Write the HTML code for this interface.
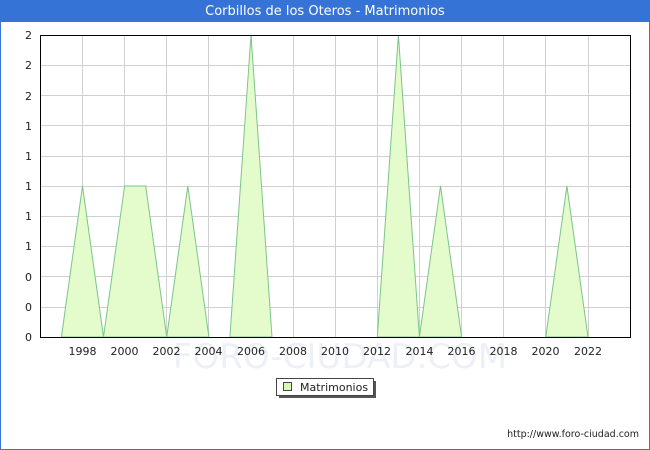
<!DOCTYPE html>
<html><head><meta charset="utf-8"><style>
body{margin:0;width:650px;height:450px;overflow:hidden;background:#fff;font-family:"DejaVu Sans","Liberation Sans",sans-serif;}
.frame{position:absolute;left:0;top:0;width:648px;height:448px;border:1px solid #3a74d8;}
.title{position:absolute;left:0;top:0;width:650px;height:22px;background:#3574d6;color:#fff;font-size:13px;text-align:center;line-height:23px;}
svg{position:absolute;left:0;top:0;}
</style></head><body>
<div class="frame"></div>
<div class="title">Corbillos de los Oteros - Matrimonios</div>
<svg width="650" height="450" font-family="DejaVu Sans, Liberation Sans, sans-serif" font-size="11">
<text x="340" y="368" font-size="34" fill="#eef0f7" text-anchor="middle">FORO-CIUDAD.COM</text>
<g stroke="#d0d0d0" stroke-width="1">
<line x1="40" y1="65.5" x2="631" y2="65.5"/><line x1="40" y1="95.5" x2="631" y2="95.5"/><line x1="40" y1="125.5" x2="631" y2="125.5"/><line x1="40" y1="156.5" x2="631" y2="156.5"/><line x1="40" y1="186.5" x2="631" y2="186.5"/><line x1="40" y1="216.5" x2="631" y2="216.5"/><line x1="40" y1="246.5" x2="631" y2="246.5"/><line x1="40" y1="276.5" x2="631" y2="276.5"/><line x1="40" y1="307.5" x2="631" y2="307.5"/>
<line x1="82.5" y1="35" x2="82.5" y2="338"/><line x1="124.5" y1="35" x2="124.5" y2="338"/><line x1="166.5" y1="35" x2="166.5" y2="338"/><line x1="208.5" y1="35" x2="208.5" y2="338"/><line x1="251.5" y1="35" x2="251.5" y2="338"/><line x1="293.5" y1="35" x2="293.5" y2="338"/><line x1="335.5" y1="35" x2="335.5" y2="338"/><line x1="377.5" y1="35" x2="377.5" y2="338"/><line x1="419.5" y1="35" x2="419.5" y2="338"/><line x1="461.5" y1="35" x2="461.5" y2="338"/><line x1="503.5" y1="35" x2="503.5" y2="338"/><line x1="545.5" y1="35" x2="545.5" y2="338"/><line x1="588.5" y1="35" x2="588.5" y2="338"/>
</g>
<g fill="#e4fccc" stroke="#7cc48c" stroke-width="1">
<polygon points="61.4,337 82.5,186 103.5,337"/>
<polygon points="103.5,337 124.6,186 145.7,186 166.7,337"/>
<polygon points="166.7,337 187.8,186 208.9,337"/>
<polygon points="229.9,337 251,35 272,337"/>
<polygon points="377.3,337 398.4,35 419.4,337"/>
<polygon points="419.4,337 440.5,186 461.6,337"/>
<polygon points="545.8,337 566.9,186 588,337"/>
</g>
<rect x="40.5" y="35.5" width="590" height="302" fill="none" stroke="#000" stroke-width="1"/>
<g fill="#222" text-anchor="end">
<text x="32" y="39">2</text><text x="32" y="69">2</text><text x="32" y="100">2</text><text x="32" y="130">1</text><text x="32" y="160">1</text><text x="32" y="190">1</text><text x="32" y="220">1</text><text x="32" y="250">1</text><text x="32" y="281">0</text><text x="32" y="311">0</text><text x="32" y="341">0</text>
</g>
<g fill="#222" text-anchor="middle">
<text x="82.5" y="355">1998</text><text x="124.5" y="355">2000</text><text x="166.5" y="355">2002</text><text x="208.5" y="355">2004</text><text x="251" y="355">2006</text><text x="293" y="355">2008</text><text x="335" y="355">2010</text><text x="377" y="355">2012</text><text x="419.5" y="355">2014</text><text x="461.5" y="355">2016</text><text x="503.5" y="355">2018</text><text x="545.5" y="355">2020</text><text x="588" y="355">2022</text>
</g>
<rect x="279" y="381" width="97" height="17" fill="#555"/>
<rect x="276.5" y="378.5" width="97" height="17" fill="#fff" stroke="#444"/>
<rect x="283.5" y="382.5" width="8" height="8" fill="#d8f8b8" stroke="#444"/>
<text x="300" y="391" fill="#222">Matrimonios</text>
<text x="639" y="437" font-size="9.5" fill="#222" text-anchor="end">http://www.foro-ciudad.com</text>
</svg>
</body></html>
